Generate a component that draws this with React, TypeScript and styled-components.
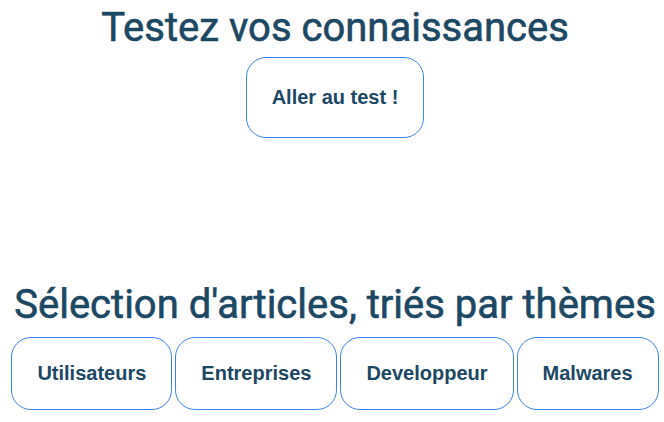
import * as React from "react";
import styled, { createGlobalStyle } from "styled-components";

const GlobalStyle = createGlobalStyle`
  html, body {
    margin: 0;
    padding: 0;
    background: #ffffff;
  }
`;

const themes = ["Utilisateurs", "Entreprises", "Developpeur", "Malwares"];

export default function App() {
  return (
    <>
      <GlobalStyle />
      <Page>
        <Section>
          <Title>Testez vos connaissances</Title>
          <Button $tall>Aller au test !</Button>
        </Section>
        <Section $spaced>
          <Title>Sélection d'articles, triés par thèmes</Title>
          <ButtonRow>
            {themes.map((t) => (
              <Button key={t}>{t}</Button>
            ))}
          </ButtonRow>
        </Section>
      </Page>
    </>
  );
}

const Page = styled.div`
  display: flex;
  flex-direction: column;
  padding: 4px 0 0 6px;
`;

const Section = styled.section<{ $spaced?: boolean }>`
  display: flex;
  flex-direction: column;
  align-items: center;
  margin-top: ${(p) => (p.$spaced ? "143px" : "0")};
`;

const Title = styled.h1`
  margin: 0;
  font-family: Roboto, "Noto Sans", sans-serif;
  font-weight: 400;
  font-size: 40px;
  line-height: 48px;
  color: #1c4863;
  -webkit-text-stroke: 0.6px #1c4863;
  white-space: nowrap;
`;

const ButtonRow = styled.div`
  display: flex;
  justify-content: center;
  gap: 3px;
  margin-top: 8px;
`;

const Button = styled.button<{ $tall?: boolean }>`
  margin-top: ${(p) => (p.$tall ? "5px" : "0")};
  padding: ${(p) => (p.$tall ? "28px 25px" : "24px 25px")};
  border: 1px solid #3c84ec;
  border-radius: 20px;
  background: #ffffff;
  font-family: "Liberation Sans", Arial, sans-serif;
  font-weight: 700;
  font-size: 20px;
  line-height: 23px;
  color: #1c4863;
  cursor: pointer;
  white-space: nowrap;
`;
